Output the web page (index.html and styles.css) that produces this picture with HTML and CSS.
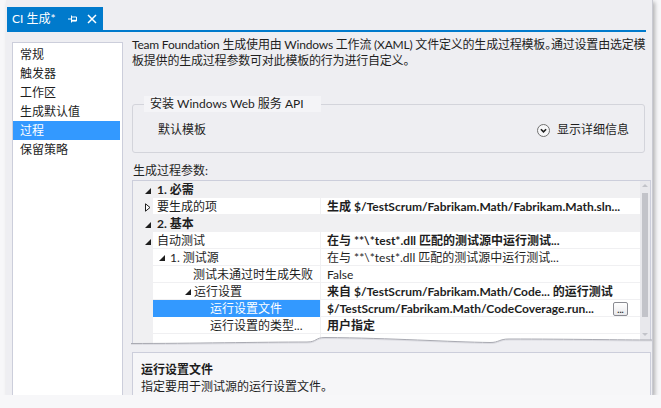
FILE: index.html
```html
<!DOCTYPE html>
<html lang="zh-CN">
<head>
<meta charset="utf-8">
<title>CI 生成</title>
<link rel="stylesheet" href="styles.css">
</head>
<body>
<div class="window">
  <div class="tabstrip">
    <div class="tab">
      <span class="tab-title">CI 生成*</span>
      <svg class="pin" width="9" height="8" viewBox="0 0 9 8"><path d="M0 4H3.5M3.5 0.5V7.5" stroke="#fff" stroke-width="1" fill="none"/><path d="M4 2H8.5V6H4" stroke="#fff" stroke-width="1" fill="none"/><path d="M4 5.5H8.5" stroke="#fff" stroke-width="1.4"/></svg>
      <svg class="close" width="10" height="10" viewBox="0 0 10 10"><path d="M1 1L9 9M9 1L1 9" stroke="#fff" stroke-width="1.5" fill="none"/></svg>
    </div>
  </div>
  <div class="tabline"></div>
  <div class="body">
    <ul class="nav">
      <li>常规</li>
      <li>触发器</li>
      <li>工作区</li>
      <li>生成默认值</li>
      <li class="selected">过程</li>
      <li>保留策略</li>
    </ul>
    <div class="main">
      <p class="desc">Team Foundation 生成使用由 Windows 工作流 (XAML) 文件定义的生成过程模板。通过设置由选定模<br>板提供的生成过程参数可对此模板的行为进行自定义。</p>
      <fieldset class="group">
        <legend>安装 Windows Web 服务 API</legend>
        <div class="group-row">
          <span>默认模板</span>
          <span class="details">
            <svg width="13" height="13" viewBox="0 0 13 13"><circle cx="6.5" cy="6.5" r="6" fill="#f7f7f9" stroke="#707070"/><path d="M3.9 5.2L6.5 7.8L9.1 5.2" fill="none" stroke="#1e1e1e" stroke-width="1.6"/></svg>
            <span>显示详细信息</span>
          </span>
        </div>
      </fieldset>
      <div class="label">生成过程参数:</div>
      <div class="grid-wrap">
        <div class="grid">
          <div class="rows">
            <div class="row cat">
              <span class="gut"><i class="exp"></i></span>
              <span class="name"><b>1. 必需</b></span>
              <span class="val"></span>
            </div>
            <div class="row">
              <span class="gut"><svg class="col" width="6" height="9" viewBox="0 0 6 9"><path d="M0.5 0.8L5 4.5L0.5 8.2Z" fill="#fff" stroke="#1e1e1e"/></svg></span>
              <span class="name l0">要生成的项</span>
              <span class="val"><b>生成 $/TestScrum/Fabrikam.Math/Fabrikam.Math.sln...</b></span>
            </div>
            <div class="row cat">
              <span class="gut"><i class="exp"></i></span>
              <span class="name"><b>2. 基本</b></span>
              <span class="val"></span>
            </div>
            <div class="row">
              <span class="gut"><i class="exp"></i></span>
              <span class="name l0">自动测试</span>
              <span class="val"><b>在与 **\*test*.dll 匹配的测试源中运行测试...</b></span>
            </div>
            <div class="row">
              <span class="gut"></span>
              <span class="name l1"><i class="exp"></i>1. 测试源</span>
              <span class="val">在与 **\*test*.dll 匹配的测试源中运行测试...</span>
            </div>
            <div class="row">
              <span class="gut"></span>
              <span class="name l2">测试未通过时生成失败</span>
              <span class="val">False</span>
            </div>
            <div class="row">
              <span class="gut"></span>
              <span class="name l2e"><i class="exp"></i>运行设置</span>
              <span class="val"><b>来自 $/TestScrum/Fabrikam.Math/Code... 的运行测试</b></span>
            </div>
            <div class="row">
              <span class="gut"></span>
              <span class="name l3 sel">运行设置文件</span>
              <span class="val"><b>$/TestScrum/Fabrikam.Math/CodeCoverage.run...</b><span class="dots">...</span></span>
            </div>
            <div class="row">
              <span class="gut"></span>
              <span class="name l3">运行设置的类型...</span>
              <span class="val"><b>用户指定</b></span>
            </div>
          </div>
          <div class="vscroll">
            <span class="arr up"></span>
            <span class="thumb"></span>
            <span class="arr down"></span>
          </div>
        </div>
        <svg class="tear" width="521" height="14" viewBox="0 0 521 14">
          <path d="M0 9.5C60 9.5 130 8 176 8C186 8 184 3.5 194 3.5C260 4 320 8 359 8.5C368 8.6 368 5 378 5C440 5 490 6 521 6V14H0Z" fill="#eeeef2"/>
          <path d="M0 10.5C60 10.5 130 9 176 9C186 9 184 4.5 194 4.5C260 5 320 9 359 9.5C368 9.6 368 6 378 6C440 6 490 7 521 7" fill="none" stroke="#dcdce2" stroke-width="1"/>
          <path d="M0 9.5C60 9.5 130 8 176 8C186 8 184 3.5 194 3.5C260 4 320 8 359 8.5C368 8.6 368 5 378 5C440 5 490 6 521 6" fill="none" stroke="#a9aab2" stroke-width="1"/>
        </svg>
      </div>
      <div class="help">
        <div class="help-title">运行设置文件</div>
        <div>指定要用于测试源的运行设置文件。</div>
      </div>
    </div>
  </div>
</div>
</body>
</html>
```

FILE: styles.css
```css
* { box-sizing: border-box; }

body {
  margin: 0;
  background: #f7f7f9;
  font-family: "Lato", "Noto Sans CJK SC", sans-serif;
  font-size: 12px;
  color: #1e1e1e;
}

.window {
  margin-left: 6px;
  width: 647px;
  height: 395px;
  background: #eeeef2;
  border-right: 1px solid #c9cad2;
  box-shadow: 2px 2px 4px rgba(0, 0, 0, 0.28);
  overflow: hidden;
  display: flex;
  flex-direction: column;
}

.tabstrip {
  height: 30px;
  flex: none;
  padding: 7px 0 0 1px;
  display: flex;
}

.tab {
  width: 96px;
  height: 23px;
  background: #007acc;
  color: #fff;
  display: flex;
  align-items: center;
  padding: 0 6px 0 5px;
}

.tab-title { line-height: 23px; white-space: nowrap; }
.pin { margin-left: auto; }
.close { margin-left: 10px; }

.tabline {
  height: 2px;
  flex: none;
  margin-left: 1px;
  width: 639px;
  background: #007acc;
}

.body {
  flex: 1;
  min-height: 0;
  display: flex;
  gap: 9px;
  padding-left: 6px;
}

.nav {
  width: 111px;
  margin: 10px 0 0;
  padding: 2px 0 0;
  list-style: none;
  background: #fff;
  border: 1px solid #cccedb;
  border-bottom: none;
}

.nav li {
  height: 19px;
  line-height: 19px;
  padding-left: 7px;
  margin-right: 2px;
  white-space: nowrap;
}

.nav li.selected { background: #3399ff; color: #fff; }

.main {
  width: 519px;
  display: flex;
  flex-direction: column;
}

.desc {
  margin: 0;
  padding-top: 5px;
  line-height: 16px;
  white-space: nowrap;
  letter-spacing: -0.2px;
  font-feature-settings: "halt";
}

.group {
  margin: 27px 0 0;
  padding: 10px 15px 14px 11px;
  width: 513px;
  min-inline-size: 0;
  border: 1px solid #d3d4db;
  border-radius: 3px;
}

.group legend {
  padding: 0 17px 0 6px;
  line-height: 16px;
  background: #f4f4f7;
  white-space: nowrap;
}

.group-row {
  display: flex;
  align-items: center;
  justify-content: space-between;
  padding-left: 14px;
  line-height: 16px;
}

.details {
  display: flex;
  align-items: center;
  gap: 7px;
}

.label {
  margin: 10px 0 1px;
  padding-left: 1px;
  line-height: 16px;
}

.grid-wrap {
  position: relative;
  height: 168px;
  flex: none;
}

.grid {
  height: 168px;
  display: flex;
  background: #fff;
  border: 1px solid #cccedb;
  border-bottom: none;
}

.rows {
  flex: 1;
  background: linear-gradient(to right, #f0f0f2 0 20px, #fff 20px 187px, #f0f0f2 187px 188px, #fff 188px);
}

.row {
  display: flex;
  height: 17px;
  line-height: 17px;
  white-space: nowrap;
}

.gut {
  width: 20px;
  flex: none;
  display: flex;
  align-items: center;
  padding: 1px 0 0 12px;
  background: #f0f0f2;
}

.name {
  width: 167px;
  flex: none;
  display: flex;
  align-items: center;
  padding-left: 4px;
  background: #fff;
  box-shadow: inset 0 -1px 0 #f0f0f2;
  overflow: hidden;
}

.name.l1 { padding-left: 6px; }
.name.l1 .exp { margin-right: 5px; }
.name.l2 { padding-left: 40px; }
.name.l2e { padding-left: 32px; }
.name.l2e .exp { margin-right: 3px; }
.name.l3 { padding-left: 57px; }
.name.sel { background: #3399ff; color: #fff; box-shadow: none; }

.val {
  flex: 1;
  min-width: 0;
  display: flex;
  align-items: center;
  padding-left: 6px;
  background: #fff;
  border-left: 1px solid #f0f0f2;
  box-shadow: inset 0 -1px 0 #f0f0f2;
  overflow: hidden;
}

.row.cat .name,
.row.cat .val {
  background: #f0f0f2;
  box-shadow: none;
  border-left: none;
}

.row.cat .name { padding-left: 4px; }

.exp {
  display: block;
  width: 0;
  height: 0;
  margin-top: 1px;
  border-style: solid;
  border-width: 0 0 6px 6px;
  border-color: transparent transparent #1e1e1e transparent;
  flex: none;
}

.col { display: block; flex: none; }

.dots {
  margin-left: auto;
  margin-right: 12px;
  width: 15px;
  height: 14px;
  border: 1px solid #8a8b92;
  border-radius: 2px;
  background: linear-gradient(#ffffff, #e9e9ec);
  font-size: 9px;
  line-height: 14px;
  text-align: center;
  font-weight: bold;
  flex: none;
}

.vscroll {
  width: 10px;
  flex: none;
  background: #e8e8ec;
  display: flex;
  flex-direction: column;
  align-items: center;
}

.arr {
  display: block;
  width: 0;
  height: 0;
  border-style: solid;
}

.arr.up {
  margin-top: 3px;
  border-width: 0 3px 3px 3px;
  border-color: transparent transparent #c2c3c9 transparent;
}

.thumb {
  display: block;
  width: 6px;
  height: 124px;
  margin-top: 6px;
  background: #c2c3c9;
}

.arr.down {
  margin-top: 16px;
  border-width: 3px 3px 0 3px;
  border-color: #c2c3c9 transparent transparent transparent;
}

.tear {
  position: absolute;
  left: -1px;
  bottom: 0;
  display: block;
}

.help {
  margin-top: 4px;
  flex: 1;
  border: 1px solid #cccedb;
  border-bottom: none;
  background: #f6f6f8;
  padding: 8px 8px 0;
  line-height: 17px;
  white-space: nowrap;
}

.help-title { font-weight: bold; }
```
